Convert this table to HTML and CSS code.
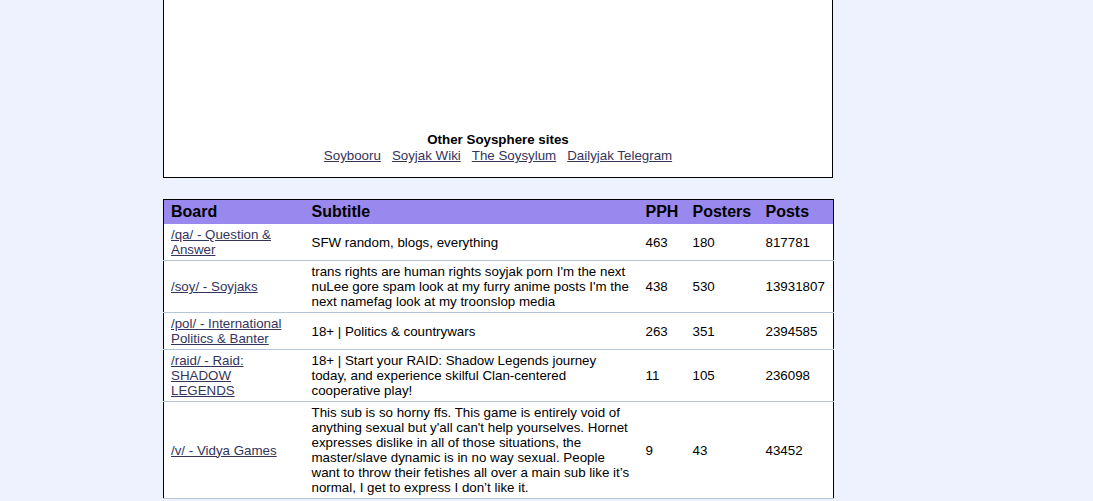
FILE: index.html
```html
<!DOCTYPE html>
<html>
<head>
<meta charset="utf-8">
<link rel="stylesheet" href="styles.css">
</head>
<body>
<div class="page">
  <div class="box">
    <div class="box-title">Other Soysphere sites</div>
    <div class="box-links">
      <a href="#">Soybooru</a>
      <a href="#">Soyjak Wiki</a>
      <a href="#">The Soysylum</a>
      <a href="#">Dailyjak Telegram</a>
    </div>
  </div>
  <table class="boards">
    <colgroup>
      <col class="c-board"><col class="c-sub"><col class="c-pph"><col class="c-posters"><col class="c-posts">
    </colgroup>
    <thead>
      <tr><th>Board</th><th>Subtitle</th><th>PPH</th><th>Posters</th><th>Posts</th></tr>
    </thead>
    <tbody>
      <tr><td class="board"><a href="#">/qa/ - Question &amp; Answer</a></td><td class="sub">SFW random, blogs, everything</td><td>463</td><td>180</td><td>817781</td></tr>
      <tr><td class="board"><a href="#">/soy/ - Soyjaks</a></td><td class="sub">trans rights are human rights soyjak porn I'm the next nuLee gore spam look at my furry anime posts I'm the next namefag look at my troonslop media</td><td>438</td><td>530</td><td>13931807</td></tr>
      <tr><td class="board"><a href="#">/pol/ - International Politics &amp; Banter</a></td><td class="sub">18+ | Politics &amp; countrywars</td><td>263</td><td>351</td><td>2394585</td></tr>
      <tr><td class="board"><a href="#">/raid/ - Raid: SHADOW LEGENDS</a></td><td class="sub">18+ | Start your RAID: Shadow Legends journey today, and experience skilful Clan-centered cooperative play!</td><td>11</td><td>105</td><td>236098</td></tr>
      <tr><td class="board"><a href="#">/v/ - Vidya Games</a></td><td class="sub">This sub is so horny ffs. This game is entirely void of anything sexual but y'all can't help yourselves. Hornet expresses dislike in all of those situations, the master/slave dynamic is in no way sexual. People want to throw their fetishes all over a main sub like it’s normal, I get to express I don’t like it.</td><td>9</td><td>43</td><td>43452</td></tr>
    </tbody>
  </table>
</div>
</body>
</html>
```

FILE: styles.css
```css
html, body {
  margin: 0;
  padding: 0;
  background: #eef2ff;
  font-family: "Liberation Sans", Arial, sans-serif;
  font-size: 13.33px;
  line-height: 15px;
  color: #000;
}
.page {
  width: 670px;
  margin-left: 163px;
}
a {
  color: #34345c;
  text-decoration: underline;
}
.box {
  margin-top: -1px;
  background: #fff;
  border: 1px solid #000;
  padding: 132px 0 14px;
  text-align: center;
}
.box-title {
  font-weight: bold;
  height: 15px;
}
.box-links {
  display: flex;
  justify-content: center;
  gap: 11px;
  margin-top: 1px;
}
.boards {
  margin-top: 21px;
  width: 670px;
  border-collapse: collapse;
  border: 1px solid #000;
  background: #fff;
  table-layout: fixed;
}
.c-board { width: 141px; }
.c-sub { width: 334px; }
.c-pph { width: 47px; }
.c-posters { width: 73px; }
.c-posts { width: 75px; }
.boards th {
  background: #9988ee;
  text-align: left;
  font-size: 16px;
  line-height: 18px;
  font-weight: bold;
  padding: 3px 7px 3px;
}
.boards td {
  padding: 3px 6px 3px 7px;
  vertical-align: middle;
  border-bottom: 1px solid #b7c5d9;
  text-align: left;
}
.boards td.board {
  padding-right: 14px;
}
.boards td.sub {
  padding-right: 8px;
}
```
